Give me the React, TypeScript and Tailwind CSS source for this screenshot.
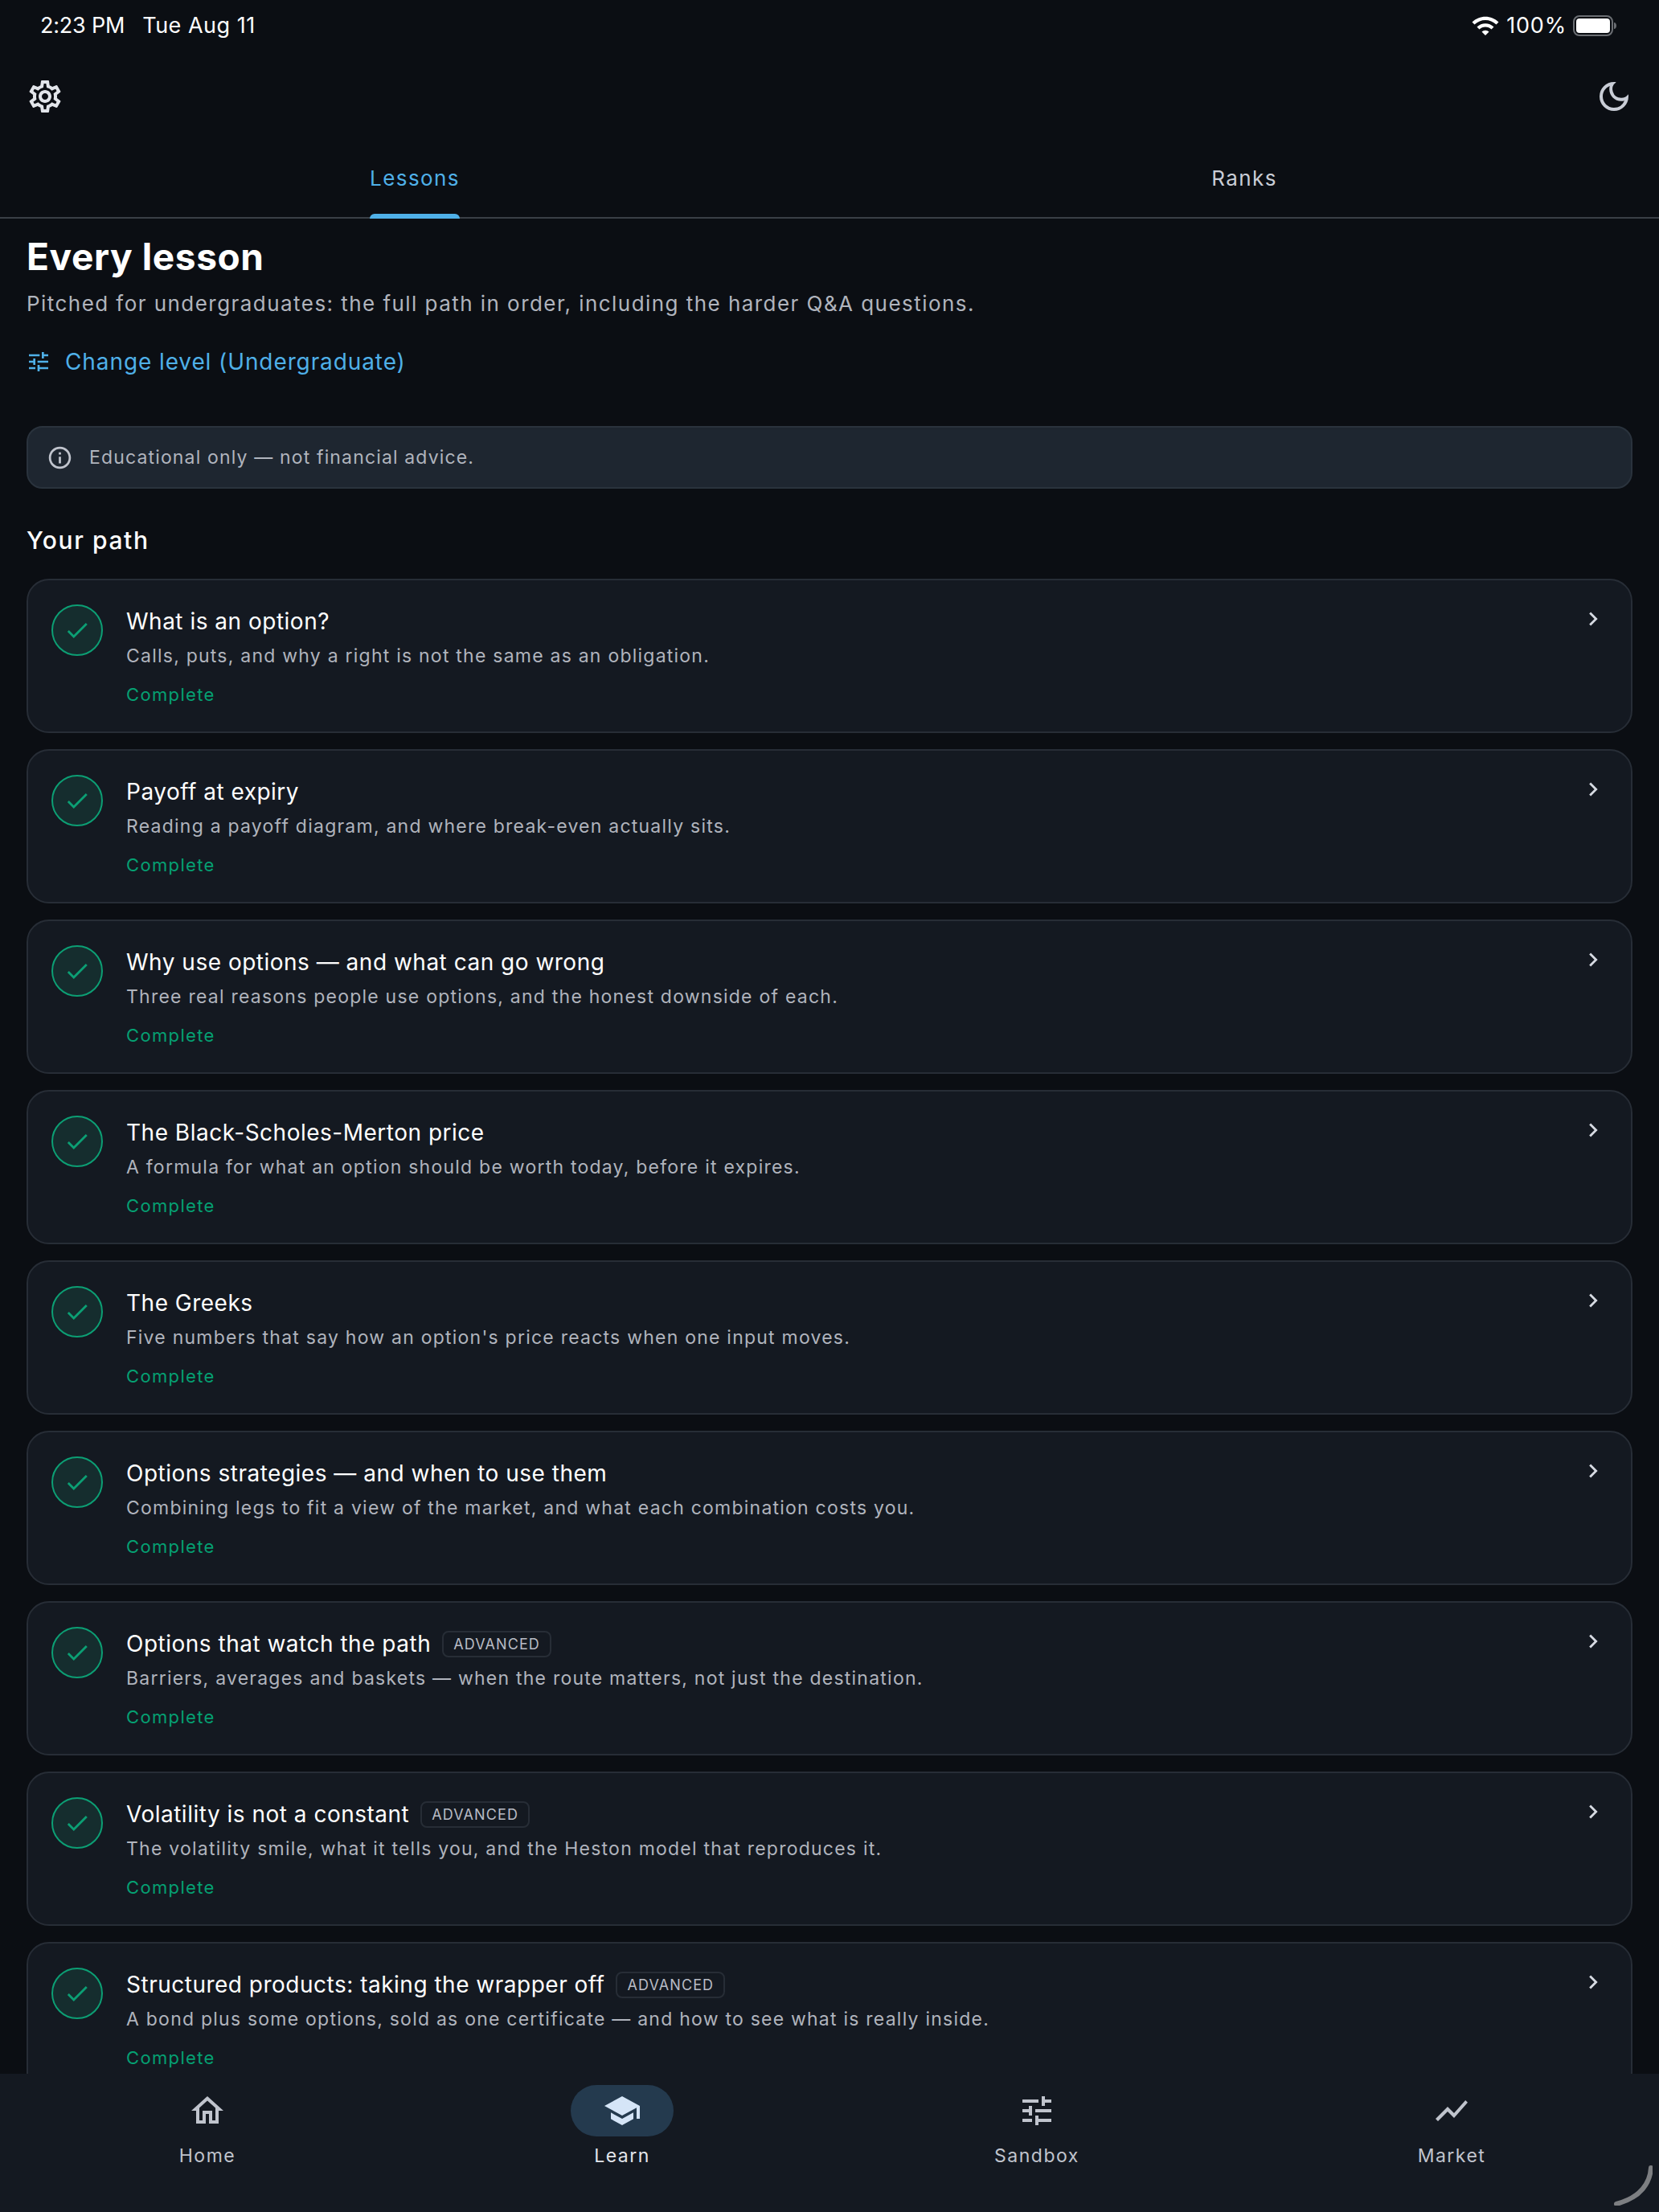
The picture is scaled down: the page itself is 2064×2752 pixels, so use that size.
import { MdOutlineSettings, MdOutlineDarkMode, MdTune, MdInfoOutline, MdCheck, MdChevronRight, MdOutlineHome, MdSchool, MdShowChart, MdWifi } from "react-icons/md"

const lessons = [
  { title: "What is an option?", desc: "Calls, puts, and why a right is not the same as an obligation." },
  { title: "Payoff at expiry", desc: "Reading a payoff diagram, and where break-even actually sits." },
  { title: "Why use options — and what can go wrong", desc: "Three real reasons people use options, and the honest downside of each." },
  { title: "The Black-Scholes-Merton price", desc: "A formula for what an option should be worth today, before it expires." },
  { title: "The Greeks", desc: "Five numbers that say how an option's price reacts when one input moves." },
  { title: "Options strategies — and when to use them", desc: "Combining legs to fit a view of the market, and what each combination costs you." },
  { title: "Options that watch the path", desc: "Barriers, averages and baskets — when the route matters, not just the destination.", advanced: true },
  { title: "Volatility is not a constant", desc: "The volatility smile, what it tells you, and the Heston model that reproduces it.", advanced: true },
  { title: "Structured products: taking the wrapper off", desc: "A bond plus some options, sold as one certificate — and how to see what is really inside.", advanced: true },
]

const navItems = [
  { label: "Home", icon: MdOutlineHome },
  { label: "Learn", icon: MdSchool, active: true },
  { label: "Sandbox", icon: MdTune },
  { label: "Market", icon: MdShowChart },
]

function LessonCard({ title, desc, advanced }: { title: string; desc: string; advanced?: boolean }) {
  return (
    <div className="flex h-[192px] shrink-0 gap-[29px] rounded-[28px] border-2 border-[#272d36] bg-[#141921] pl-[29px] pr-[30px] pt-[30px]">
      <div className="flex h-[64px] w-[64px] shrink-0 items-center justify-center rounded-full border-2 border-[#0c9f74] bg-[#152d2e]">
        <MdCheck className="text-[34px] text-[#0c9f74]" />
      </div>
      <div className="min-w-0 flex-1">
        <div className="flex h-[42px] items-center gap-[14px]">
          <span className="text-[28px] leading-[42px] tracking-[0.5px] text-white">{title}</span>
          {advanced && (
            <span className="rounded-[8px] border-2 border-[#272d36] px-[12px] py-[4px] text-[18px] leading-[21px] tracking-[1.1px] text-[#b8bcc5]">
              ADVANCED
            </span>
          )}
        </div>
        <p className="mt-[3px] text-[23px] leading-[38px] tracking-[1.23px] text-[#b0b4bd]">{desc}</p>
        <p className="mt-[12px] text-[22px] leading-[34px] tracking-[1.35px] text-[#05a072]">Complete</p>
      </div>
      <MdChevronRight className="mt-[1px] shrink-0 text-[34px] text-[#d6dae2]" />
    </div>
  )
}

export default function App() {
  return (
    <div className="flex h-[2752px] w-[2064px] flex-col overflow-hidden bg-[#0b0e13] font-['Inter',sans-serif]">
      <div className="flex h-[64px] shrink-0 items-center justify-between pl-[50px] pr-[52px] text-[27px] text-white">
        <div className="flex gap-[22px]">
          <span className="tracking-[-0.2px]">2:23 PM</span>
          <span className="tracking-[0.5px]">Tue Aug 11</span>
        </div>
        <div className="flex items-center gap-[8px]">
          <MdWifi className="text-[36px]" />
          <span className="tracking-[0.8px]">100%</span>
          <svg width="55" height="26" viewBox="0 0 55 26">
            <rect x="1" y="1" width="48" height="24" rx="7" fill="none" stroke="#6b6e73" strokeWidth="2" />
            <rect x="4" y="4" width="42" height="18" rx="4" fill="#fff" />
            <path d="M51 9c2 0 3 2 3 4s-1 4-3 4z" fill="#6b6e73" />
          </svg>
        </div>
      </div>
      <div className="flex h-[112px] shrink-0 items-center justify-between pl-[32px] pr-[32px]">
        <MdOutlineSettings className="text-[48px] text-[#e2e5ea]" />
        <MdOutlineDarkMode className="text-[48px] text-[#c9cdd6]" />
      </div>
      <div className="flex h-[96px] shrink-0 border-b-2 border-[#3a3f46]">
        <div className="flex flex-1 justify-center">
          <div className="relative flex h-full items-center pb-[3px] text-[26px] tracking-[1.4px] text-[#4fb0e8]">
            Lessons
            <span className="absolute bottom-[-2px] left-0 right-0 h-[6px] rounded-t-[6px] bg-[#4fb0e8]" />
          </div>
        </div>
        <div className="flex flex-1 items-center justify-center pb-[3px] text-[26px] tracking-[1.4px] text-[#c9cdd6]">Ranks</div>
      </div>
      <div className="min-h-0 flex-1 overflow-hidden px-[33px]">
        <h1 className="mt-[17px] text-[46px] font-bold leading-[60px] tracking-[0.6px] text-white">Every lesson</h1>
        <p className="mt-[9px] text-[26px] leading-[40px] tracking-[1.45px] text-[#b0b4bd]">
          Pitched for undergraduates: the full path in order, including the harder Q&amp;A questions.
        </p>
        <div className="mt-[30px] flex h-[44px] items-center gap-[17px] text-[#4fb0e8]">
          <MdTune className="ml-[-1px] text-[32px]" />
          <span className="text-[28px] tracking-[0.9px]">Change level (Undergraduate)</span>
        </div>
        <div className="mt-[58px] flex h-[78px] items-center gap-[20px] rounded-[20px] border-2 border-[#2a333d] bg-[#1e2630] pl-[23px]">
          <MdInfoOutline className="text-[33px] text-[#c0c4cd]" />
          <span className="text-[23px] tracking-[1.15px] text-[#b0b4bd]">Educational only — not financial advice.</span>
        </div>
        <h2 className="mt-[42px] text-[30px] font-medium leading-[44px] tracking-[1.6px] text-white">Your path</h2>
        <div className="mt-[26px] flex flex-col gap-[20px]">
          {lessons.map((l) => (
            <LessonCard key={l.title} title={l.title} desc={l.desc} advanced={l.advanced} />
          ))}
        </div>
      </div>
      <div className="relative grid h-[172px] shrink-0 grid-cols-4 bg-[#141921]">
        {navItems.map((item) => {
          const Icon = item.icon
          return (
            <div key={item.label} className="flex flex-col items-center pt-[14px]">
              <div className={`flex h-[64px] w-[128px] items-center justify-center rounded-full ${item.active ? "bg-[#243a4e]" : ""}`}>
                <Icon className={`text-[48px] ${item.active ? "text-[#d5e5f7]" : "text-[#c0c4cd]"}`} />
              </div>
              <span className={`mt-[6px] text-[23px] leading-[36px] tracking-[1.5px] ${item.active ? "text-[#e3e6ec]" : "text-[#c0c4cd]"}`}>
                {item.label}
              </span>
            </div>
          )
        })}
        <svg width="50" height="50" viewBox="0 0 50 50" className="absolute bottom-[8px] right-[8px]">
          <path d="M48 3c-1 18-12 37-43 45" fill="none" stroke="#7d7f82" strokeWidth="6" strokeLinecap="round" />
        </svg>
      </div>
    </div>
  )
}
